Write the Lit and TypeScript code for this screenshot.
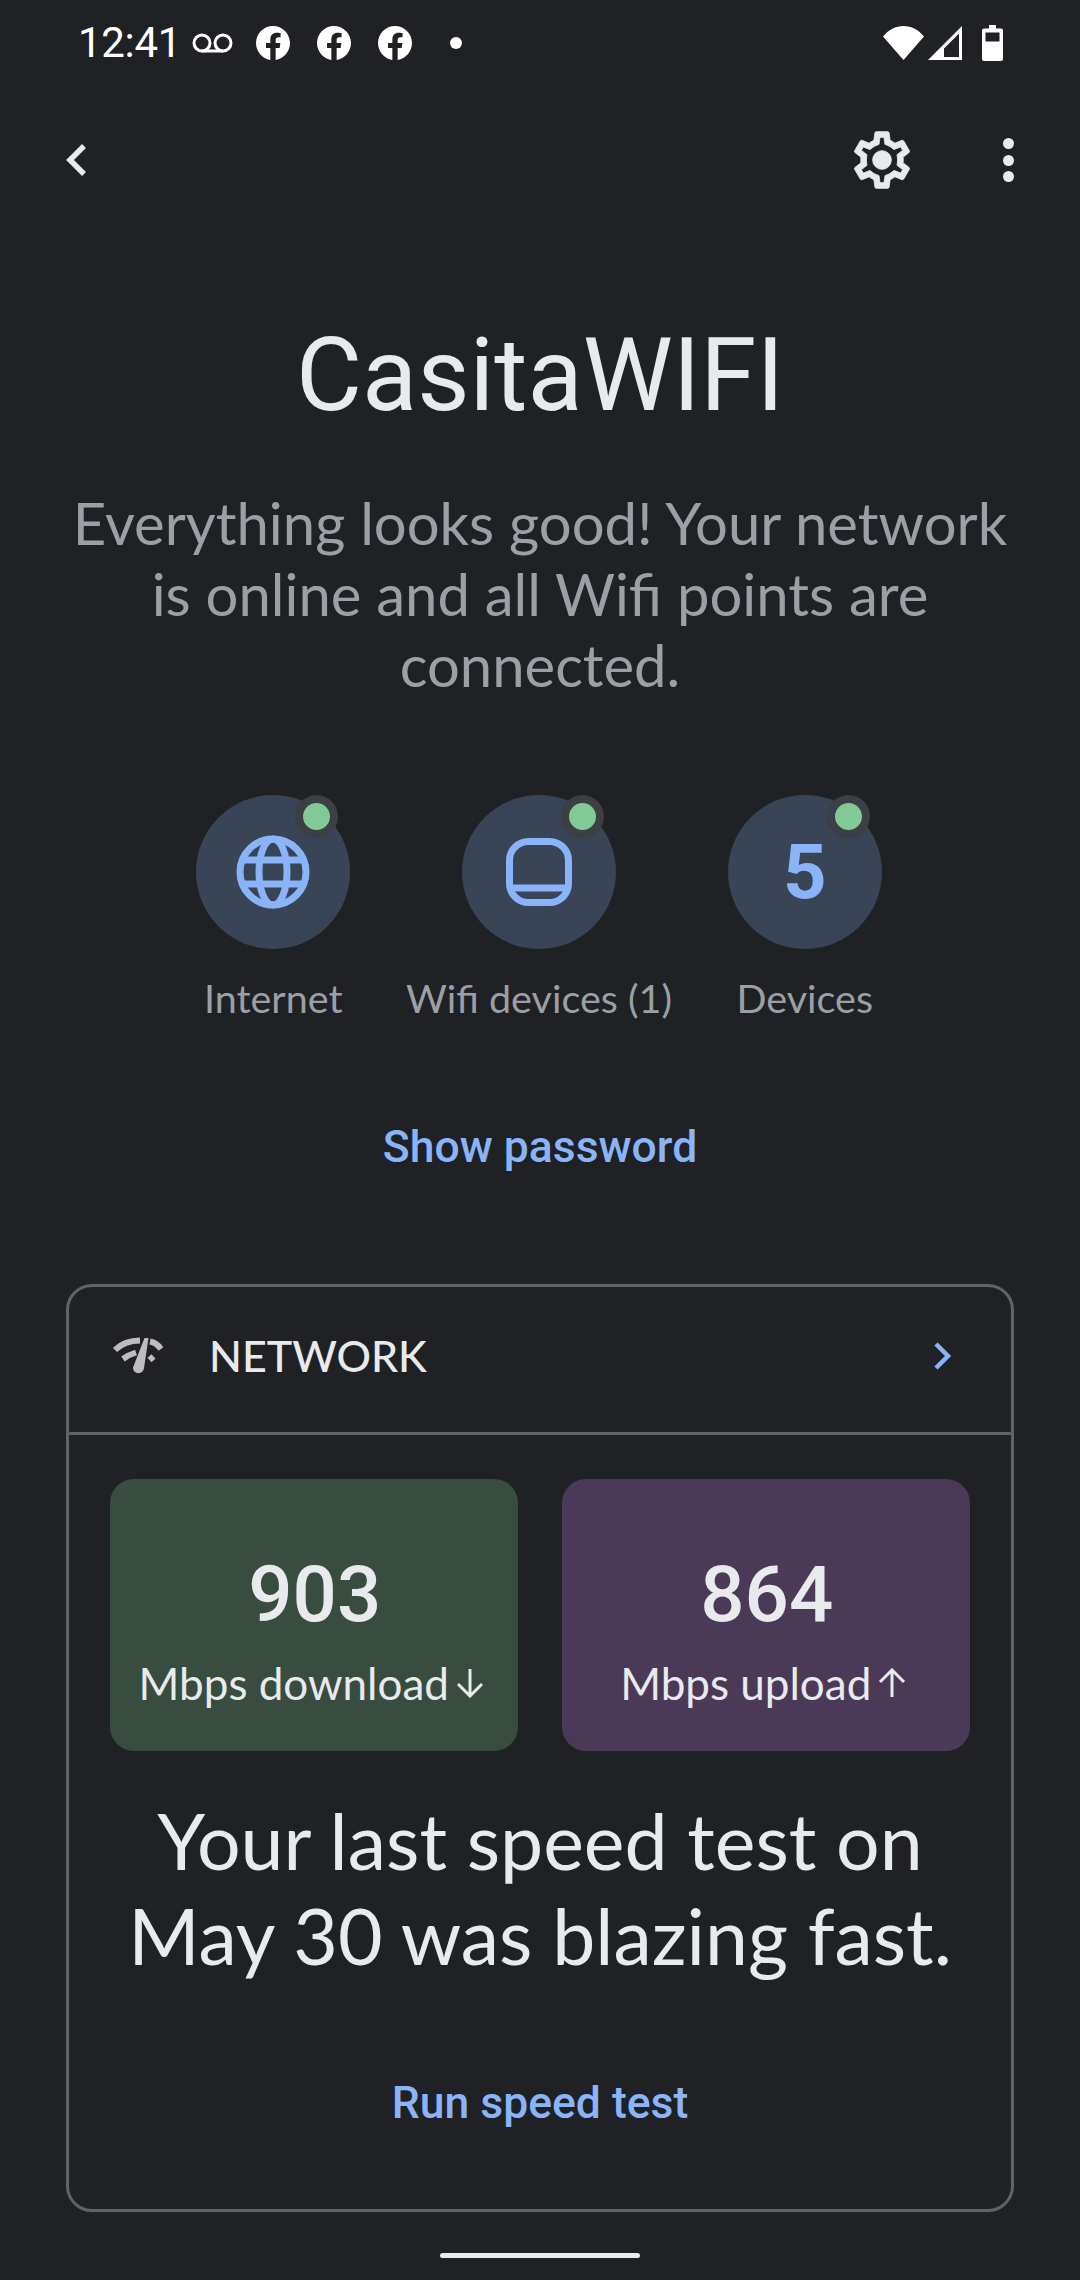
import { LitElement, html, css } from "lit";
import { customElement } from "lit/decorators.js";

const fb = html`<svg class="fb" viewBox="0 0 24 24"><path fill="#fff" d="M24 12.07C24 5.4 18.63 0 12 0S0 5.4 0 12.07c0 6.03 4.39 11.02 10.13 11.93v-8.44H7.08v-3.49h3.05V9.41c0-3.02 1.79-4.69 4.53-4.69 1.31 0 2.68.24 2.68.24v2.96h-1.51c-1.49 0-1.96.93-1.96 1.85v2.26h3.33l-.53 3.49h-2.8V24C19.61 23.09 24 18.1 24 12.07z"/></svg>`;

const gearPath = "M19.43 12.98c.04-.32.07-.64.07-.98 0-.34-.03-.66-.07-.98l2.11-1.65c.19-.15.24-.42.12-.64l-2-3.46c-.09-.16-.26-.25-.44-.25-.06 0-.12.01-.17.03l-2.49 1c-.52-.4-1.08-.73-1.69-.98l-.38-2.65C14.46 2.18 14.25 2 14 2h-4c-.25 0-.46.18-.49.42l-.38 2.65c-.61.25-1.17.59-1.69.98l-2.49-1c-.06-.02-.12-.03-.18-.03-.17 0-.34.09-.43.25l-2 3.46c-.13.22-.07.49.12.64l2.11 1.65c-.04.32-.07.65-.07.98 0 .33.03.66.07.98l-2.11 1.65c-.19.15-.24.42-.12.64l2 3.46c.09.16.26.25.44.25.06 0 .12-.01.17-.03l2.49-1c.52.4 1.08.73 1.69.98l.38 2.65c.03.24.24.42.49.42h4c.25 0 .46-.18.49-.42l.38-2.65c.61-.25 1.17-.59 1.69-.98l2.49 1c.06.02.12.03.18.03.17 0 .34-.09.43-.25l2-3.46c.12-.22.07-.49-.12-.64l-2.11-1.65zm-1.98-1.71c.04.31.05.52.05.73 0 .21-.02.43-.05.73l-.14 1.13.89.7 1.08.84-.7 1.21-1.27-.51-1.04-.42-.9.68c-.43.32-.84.56-1.25.73l-1.06.43-.16 1.13-.2 1.35h-1.4l-.19-1.35-.16-1.13-1.06-.43c-.43-.18-.83-.41-1.23-.71l-.91-.7-1.06.43-1.27.51-.7-1.21 1.08-.84.89-.7-.14-1.13c-.03-.31-.05-.54-.05-.74s.02-.43.05-.73l.14-1.13-.89-.7-1.08-.84.7-1.21 1.27.51 1.04.42.9-.68c.43-.32.84-.56 1.25-.73l1.06-.43.16-1.13.2-1.35h1.39l.19 1.35.16 1.13 1.06.43c.43.18.83.41 1.23.71l.91.7 1.06-.43 1.27-.51.7 1.21-1.07.85-.89.7.14 1.13z";

const globe = html`<svg class="glyph" width="74" height="74" viewBox="0 0 74 74" fill="none" stroke="#8ab4f8" stroke-width="7">
  <circle cx="37" cy="37" r="33"/><ellipse cx="37" cy="37" rx="14" ry="33"/>
  <path d="M5 25h64M5 49h64"/></svg>`;
const router = html`<svg class="glyph" width="66" height="68" viewBox="0 0 66 68" fill="none" stroke="#8ab4f8" stroke-width="7">
  <rect x="3.5" y="3.5" width="59" height="61" rx="19"/><path d="M3.5 50h59"/></svg>`;

@customElement("app-root")
export class AppRoot extends LitElement {
  static styles = css`
    :host { display: block; width: 1080px; height: 2280px; background: #202124; color: #e8eaed; font-family: Lato, sans-serif; overflow: hidden; }
    svg { display: block; flex: none; }
    .status { height: 86px; display: flex; align-items: center; padding: 0 77px 0 78px; }
    .time { font: 400 42px/86px Roboto, sans-serif; color: #fff; width: 114px; letter-spacing: -0.3px; }
    .fb { width: 34px; height: 34px; margin-right: 27px; }
    .vm { margin-right: 23px; }
    .dot { width: 12px; height: 12px; border-radius: 50%; background: #fff; margin-left: 11px; }
    .spacer { flex: 1; }
    .sig { margin-left: 4px; }
    .bat { margin-left: 20px; }
    .toolbar { height: 148px; display: flex; align-items: center; padding: 0 66px 0 66px; }
    .gear { margin-right: 87px; }
    .more { display: flex; flex-direction: column; gap: 5.5px; }
    .more i { width: 11px; height: 11px; border-radius: 50%; background: #e8eaed; display: block; }
    h1 { margin: 82px 0 0; font: 400 101.5px/120px Roboto, sans-serif; text-align: center; color: #e8eaed; }
    .sub { margin: 51px 0 0; font: 400 58px/71px Lato, sans-serif; text-align: center; color: #9aa0a6; }
    .items { margin: 95px 0 0 140.5px; width: 797px; display: grid; grid-template-columns: repeat(3, 1fr); }
    .item { display: flex; flex-direction: column; align-items: center; }
    .circle { position: relative; width: 154px; height: 154px; border-radius: 50%; background: #394457; display: flex; align-items: center; justify-content: center; }
    .five { font: 700 76px/1 Roboto, sans-serif; color: #8ab4f8; }
    .badge { position: absolute; left: 99px; top: 0; width: 43px; height: 43px; border-radius: 50%; background: #3c3f43; display: flex; align-items: center; justify-content: center; }
    .badge i { width: 27px; height: 27px; border-radius: 50%; background: #81c995; display: block; }
    .label { margin-top: 27px; font: 400 39.5px/44px Lato, sans-serif; color: #9aa0a6; white-space: nowrap; }
    .link { text-align: center; font: 500 44.5px/48px Roboto, sans-serif; color: #8ab4f8; }
    .show { margin-top: 103px; }
    .card { margin: 113px 66px 0 66px; height: 928px; box-sizing: border-box; border: 3px solid #5f6368; border-radius: 26px; display: flex; flex-direction: column; }
    .head { height: 145px; box-sizing: content-box; border-bottom: 3px solid #5f6368; display: flex; align-items: center; padding: 0 59px 0 44px; flex: none; }
    .net { font: 500 43px/137px Lato, sans-serif; color: #e8eaed; margin-left: 46px; flex: 1; align-self: flex-start; }
    .net-ico { margin-top: -8px; }
    .stats { margin: 44px 41px 0 41px; display: grid; grid-template-columns: 407.5px 407.5px; gap: 44.5px; }
    .stat { height: 272px; border-radius: 24px; display: flex; flex-direction: column; align-items: center; }
    .green { background: #384c40; }
    .purple { background: #4a3a57; }
    .num { margin-top: 69px; font: 500 78px/94px Roboto, sans-serif; color: #e8eaed; padding-left: 2px; }
    .unit { margin-top: 15px; font: 400 44px/52px Lato, sans-serif; color: #e8eaed; display: flex; align-items: center; gap: 6px; white-space: nowrap; padding-right: 4px; }
    .speed { margin: 42px 0 0; font: 400 77px/95px Lato, sans-serif; text-align: center; color: #e8eaed; }
    .run { margin-top: 96px; }
    .home { margin: 41px auto 0; width: 200px; height: 5px; border-radius: 3px; background: #e8eaed; }
  `;

  render() {
    return html`
      <div class="status">
        <span class="time">12:41</span>
        <svg class="vm" width="41" height="20" viewBox="0 0 41 20" fill="none" stroke="#fff" stroke-width="3"><circle cx="10" cy="10" r="8"/><circle cx="31" cy="10" r="8"/><path d="M10 18h21"/></svg>
        ${fb}${fb}${fb}
        <span class="dot"></span>
        <span class="spacer"></span>
        <svg width="41" height="34" viewBox="0 0 41 34"><path fill="#fff" d="M0 10.5C5.5 4 12.5 0 20.5 0S35.5 4 41 10.5L20.5 34z"/></svg>
        <svg class="sig" width="34" height="34" viewBox="0 0 34 34"><path fill="#fff" fill-rule="evenodd" d="M34 0v34H0zM31 7.5 16 22.5V31h15z"/><path fill="#fff" d="M16 31H7.5l8.500-8.500z"/></svg>
        <svg class="bat" width="21" height="36" viewBox="0 0 21 36"><path fill="#fff" fill-rule="evenodd" d="M7 0h7v3.500h5a2 2 0 0 1 2 2V34a2 2 0 0 1-2 2H2a2 2 0 0 1-2-2V5.500a2 2 0 0 1 2-2h5zM3.500 7.500V16.500h14V7.500z"/></svg>
      </div>
      <div class="toolbar">
        <svg width="20" height="32" viewBox="0 0 20 32" fill="none" stroke="#e8eaed" stroke-width="5.5"><path d="M18 2 4 16l14 14"/></svg>
        <span class="spacer"></span>
        <svg class="gear" width="68" height="68" viewBox="0 0 24 24" fill="#e8eaed" stroke="#e8eaed" stroke-width=".3"><path d="${gearPath}"/><circle cx="12" cy="12" r="3.3"/></svg>
        <div class="more"><i></i><i></i><i></i></div>
      </div>
      <h1>CasitaWIFI</h1>
      <p class="sub">Everything looks good! Your network<br />is online and all Wifi points are<br />connected.</p>
      <div class="items">
        <div class="item"><div class="circle">${globe}<span class="badge"><i></i></span></div><div class="label">Internet</div></div>
        <div class="item"><div class="circle">${router}<span class="badge"><i></i></span></div><div class="label">Wifi devices (1)</div></div>
        <div class="item"><div class="circle"><span class="five">5</span><span class="badge"><i></i></span></div><div class="label">Devices</div></div>
      </div>
      <div class="link show">Show password</div>
      <div class="card">
        <div class="head">
          <svg class="net-ico" width="50" height="37" viewBox="0 0 50 37" fill="none" stroke="#bdbdbd" stroke-width="6">
            <path d="M2 13C8 7 16 3.500 27 3.500"/><path d="M37 4.500c5 1 8.500 4 11 7.500"/>
            <path d="M10 22c4-3 8-5 13-6.500"/><path d="M36.500 23l4-3.500"/>
            <path fill="#bdbdbd" stroke="none" d="M31.500 1h4L31 31a5.500 5.500 0 0 1-11-.5z"/>
          </svg>
          <span class="net">NETWORK</span>
          <svg class="net-ico" width="20" height="28" viewBox="0 0 20 28" fill="none" stroke="#8ab4f8" stroke-width="4.5"><path d="M4 2l12 12L4 26"/></svg>
        </div>
        <div class="stats">
          <div class="stat green"><div class="num">903</div><div class="unit">Mbps download<svg width="30" height="30" viewBox="0 0 30 30" fill="none" stroke="#e8eaed" stroke-width="3"><path d="M15 1v27M3 16l12 12 12-12"/></svg></div></div>
          <div class="stat purple"><div class="num">864</div><div class="unit">Mbps upload<svg width="30" height="30" viewBox="0 0 30 30" fill="none" stroke="#e8eaed" stroke-width="3"><path d="M15 29V2M3 14 15 2l12 12"/></svg></div></div>
        </div>
        <p class="speed">Your last speed test on<br />May 30 was blazing fast.</p>
        <div class="link run">Run speed test</div>
      </div>
      <div class="home"></div>
    `;
  }
}
